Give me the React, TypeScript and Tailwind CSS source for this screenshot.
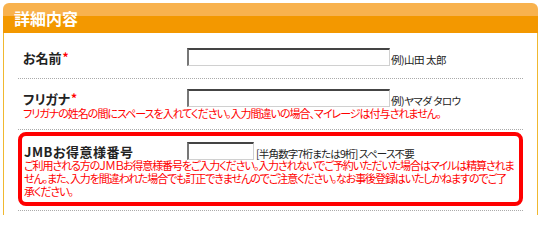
export default function App() {
  return (
    <div className="h-[215px] w-[540px] overflow-hidden bg-white pl-[3px] pt-[3px] font-['Noto_Sans_CJK_JP',sans-serif] text-[#222] [font-feature-settings:'palt']">
      <div className="w-[535px]">
        <div className="flex h-[30px] items-center rounded-t-[6px] bg-[linear-gradient(#f8b24e_0,#f8b24e_44%,#f39800_44%)] pl-[11px] text-[16px] font-bold leading-none text-white">
          詳細内容
        </div>

        <div className="h-[182px] border-x border-[#f0b830] px-[14px]">
          <div className="flex border-b border-dotted border-[#aaa] pb-[12px] pt-[15px]">
            <div className="flex w-[169px] items-center pl-[5px] text-[13px] font-bold leading-none">
              お名前<span className="ml-[1px] text-[12px] text-[#f00]">*</span>
            </div>
            <input className="h-[18px] w-[203px] border-b border-l-2 border-r border-t-2 border-b-[#d0d0d0] border-l-[#777] border-r-[#d0d0d0] border-t-[#444] bg-white" />
            <div className="ml-[1px] flex items-end pb-[1px] text-[10.5px] leading-none tracking-[-0.5px]">例)山田 太郎</div>
          </div>

          <div className="border-b border-dotted border-[#aaa] pb-[9px] pt-[10px]">
            <div className="flex">
              <div className="flex w-[169px] items-center pl-[5px] text-[13px] font-bold leading-none">
                フリガナ<span className="ml-[1px] text-[12px] text-[#f00]">*</span>
              </div>
              <input className="h-[18px] w-[203px] border-b border-l-2 border-r border-t-2 border-b-[#d0d0d0] border-l-[#777] border-r-[#d0d0d0] border-t-[#444] bg-white" />
              <div className="ml-[1px] flex items-end pb-[1px] text-[10.5px] leading-none tracking-[-0.5px]">例)ヤマダ タロウ</div>
            </div>
            <div className="whitespace-nowrap pl-[5px] text-[11px] leading-[13px] tracking-[-1px] text-[#f00]">
              フリガナの姓名の間にスペースを入れてください。入力間違いの場合、マイレージは付与されません。
            </div>
          </div>

          <div className="mt-[2px] rounded-[8px] border-4 border-[#f00] pb-[4px] pl-[2px] pt-[6px]">
            <div className="flex">
              <div className="flex w-[163px] items-center text-[13px] font-bold leading-none tracking-[0.5px]">JMBお得意様番号</div>
              <input className="h-[18px] w-[67px] border-b border-l-2 border-r border-t-2 border-b-[#d0d0d0] border-l-[#777] border-r-[#d0d0d0] border-t-[#444] bg-white" />
              <div className="ml-[2px] flex items-end pb-[1px] text-[10.5px] leading-none tracking-[-0.8px]">[半角数字7桁または9桁] スペース不要</div>
            </div>
            <div className="-mt-[1px] whitespace-nowrap text-[11px] leading-[13px] tracking-[-1.1px] text-[#f00]">
              ご利用される方のＪＭＢお得意様番号をご入力ください。入力されないでご予約いただいた場合はマイルは精算されま
              <br />
              せん。また、入力を間違われた場合でも訂正できませんのでご注意ください。なお事後登録はいたしかねますのでご了
              <br />
              承ください。
            </div>
          </div>
          <div className="mt-[4px] border-b border-dotted border-[#aaa]" />
        </div>
      </div>
    </div>
  )
}
